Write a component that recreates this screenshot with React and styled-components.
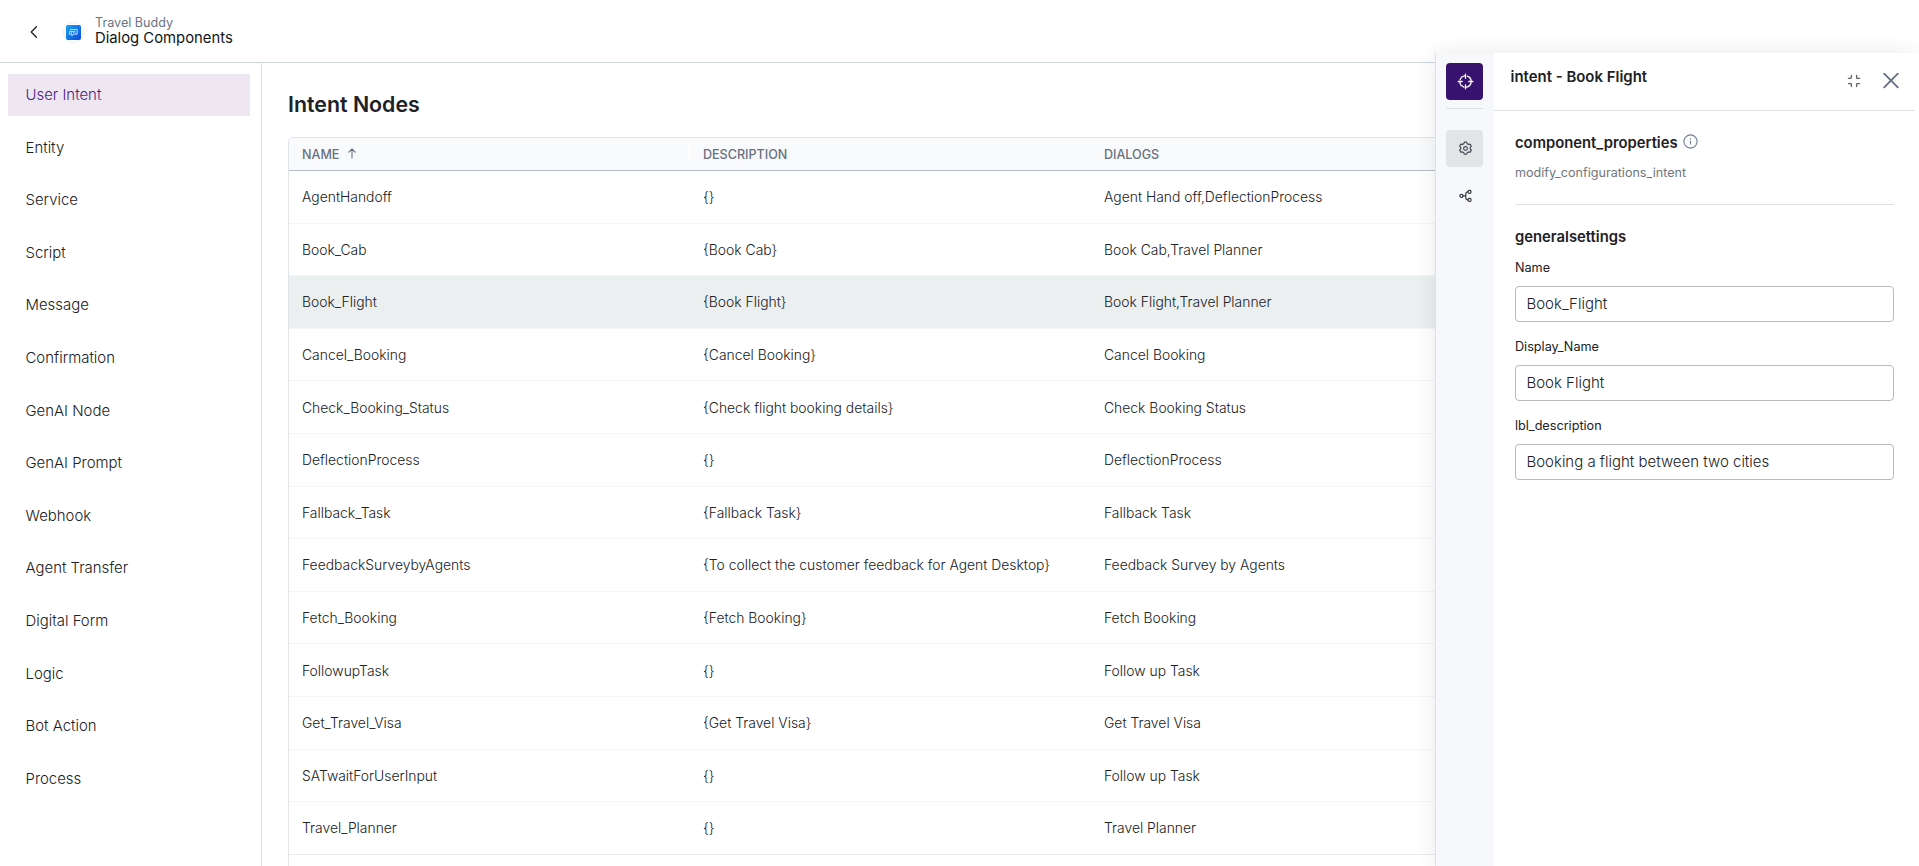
import React from 'react';
import styled, { createGlobalStyle } from 'styled-components';

const GlobalStyle = createGlobalStyle`
  *, *::before, *::after { box-sizing: border-box; }
  html, body, #root { height: 100%; margin: 0; }
  body {
    overflow: hidden;
    background: #fff;
    color: #202124;
    font-family: 'Inter', 'Liberation Sans', sans-serif;
  }
`;

const Page = styled.div`
  position: relative;
  display: flex;
  flex-direction: column;
  height: 866px;
  overflow: hidden;
`;

const TopBar = styled.header`
  display: flex;
  align-items: center;
  flex: none;
  height: 63px;
  padding: 2px 0 0 28px;
  border-bottom: 1px solid #cdd4db;
`;

const BackButton = styled.button`
  display: flex;
  width: 12px;
  padding: 0;
  margin-right: 23px;
  border: 0;
  background: none;
`;

const BotBadge = styled.span`
  display: flex;
  align-items: center;
  justify-content: center;
  width: 21px;
  height: 21px;
  margin-right: 11px;
  border: 1px solid #e9edf3;
  border-radius: 50%;
`;

const Titles = styled.div`
  display: flex;
  flex-direction: column;
  padding-bottom: 3px;
`;

const BotName = styled.span`
  font-size: 12.6px;
  line-height: 15px;
  color: #697586;
`;

const PageName = styled.span`
  font-size: 14.83px;
  line-height: 16px;
  color: #111418;
`;

const Body = styled.div`
  display: flex;
  flex: 1;
  min-height: 0;
`;

const Sidebar = styled.nav`
  display: flex;
  flex-direction: column;
  gap: 10.6px;
  flex: none;
  width: 262px;
  padding: 11px 11px 0 8px;
  border-right: 1px solid #dfe1e4;
`;

const NavItem = styled.a`
  display: flex;
  align-items: center;
  flex: none;
  height: 42px;
  padding-left: 17.5px;
  font-size: 14.95px;
  font-weight: 300;
  color: ${(p) => (p.$active ? '#4b1d7c' : '#202124')};
  background: ${(p) => (p.$active ? '#eee6f1' : 'transparent')};
`;

const Main = styled.main`
  flex: 1;
  min-width: 0;
  padding: 28px 0 0 26px;
`;

const Heading = styled.h1`
  margin: 0 0 19px;
  font-size: 21.35px;
  font-weight: 600;
  line-height: 27px;
`;

const Table = styled.div`
  height: 760px;
  border: 1px solid #e1e4e8;
  border-radius: 5px 0 0 0;
  overflow: hidden;
`;

const Columns = styled.div`
  display: grid;
  grid-template-columns: 401px 401px 1fr;
  align-items: center;
  padding-left: 13px;
`;

const HeadRow = styled(Columns)`
  height: 33px;
  background: #f9fafc;
  border-bottom: 1px solid #b9bdc7;
`;

const HeadCell = styled.div`
  display: flex;
  align-items: center;
  gap: 9px;
  height: 16px;
  margin-right: 13px;
  border-right: ${(p) => (p.$divided ? '2px solid #fff' : '0')};
  font-size: 12.55px;
  font-weight: 500;
  color: #697080;
`;

const Row = styled(Columns)`
  height: 52.6px;
  padding-top: 1px;
  border-bottom: 1px solid ${(p) => (p.$last ? '#e8eaec' : '#f4f5f6')};
  background: ${(p) => (p.$selected ? '#ebefef' : '#fff')};
`;

const Cell = styled.span`
  font-size: 13.9px;
  font-weight: 300;
  white-space: nowrap;
`;

const Drawer = styled.aside`
  position: absolute;
  top: 53px;
  right: 4px;
  bottom: 0;
  display: flex;
  width: 480px;
  border-left: 1px solid #dfe1e5;
  background: #fff;
  box-shadow: 4px 0 0 #fff, 0 0 21px rgba(0, 0, 0, 0.09);
`;

const Rail = styled.div`
  display: flex;
  flex-direction: column;
  align-items: center;
  flex: none;
  width: 58px;
  padding: 10px 1px 0 0;
  background: #f7f8fb;
`;

const RailButton = styled.button`
  display: flex;
  align-items: center;
  justify-content: center;
  width: 37px;
  height: 37px;
  padding: 0 0 1px 1px;
  border: 0;
  border-radius: 4px;
  background: ${(p) => p.$fill || 'transparent'};
`;

const RailDivider = styled.div`
  width: 37px;
  height: 1px;
  margin: 8px 0 21px;
  background: #dfe1e4;
`;

const RailGap = styled.div`
  height: 10px;
`;

const Panel = styled.div`
  flex: 1;
  min-width: 0;
`;

const PanelHeader = styled.div`
  display: flex;
  align-items: flex-start;
  height: 58px;
  padding: 15px 15px 0 16.5px;
  border-bottom: 1px solid #dfe1e4;
`;

const PanelTitle = styled.h2`
  flex: 1;
  margin: 0;
  font-size: 14.95px;
  font-weight: 600;
  line-height: 18px;
`;

const IconButton = styled.button`
  display: flex;
  align-items: center;
  justify-content: center;
  width: 18px;
  height: 18px;
  margin: 4px 0 0 19px;
  padding: 0;
  border: 0;
  background: none;
`;

const PanelBody = styled.div`
  display: flex;
  flex-direction: column;
  padding: 22px 21px 0;
`;

const SectionTitle = styled.h3`
  display: flex;
  align-items: center;
  gap: 5px;
  margin: 0;
  font-size: 14.8px;
  font-weight: 600;
  line-height: 20px;
`;

const InfoMark = styled.svg`
  margin-top: -4px;
`;

const Hint = styled.p`
  margin: 11px 0 22px;
  font-size: 12.6px;
  line-height: 18px;
  color: #72767d;
`;

const Divider = styled.div`
  height: 1px;
  margin-bottom: 22px;
  background: #dfe1e4;
`;

const Field = styled.label`
  display: flex;
  flex-direction: column;
  height: 79px;
`;

const Label = styled.span`
  padding: 12px 0 10px;
  font-size: 12.65px;
  line-height: 17px;
`;

const Input = styled.input`
  width: 100%;
  height: 36px;
  padding: 0 11px 2px 10.5px;
  border: 1px solid #b8bac2;
  border-radius: 4px;
  outline: none;
  background: #fff;
  color: #202124;
  font: 300 14.97px 'Inter', 'Liberation Sans', sans-serif;
`;

const navItems = [
  'User Intent', 'Entity', 'Service', 'Script', 'Message', 'Confirmation', 'GenAI Node',
  'GenAI Prompt', 'Webhook', 'Agent Transfer', 'Digital Form', 'Logic', 'Bot Action', 'Process',
];

const rows = [
  ['AgentHandoff', '{}', 'Agent Hand off,DeflectionProcess'],
  ['Book_Cab', '{Book Cab}', 'Book Cab,Travel Planner'],
  ['Book_Flight', '{Book Flight}', 'Book Flight,Travel Planner'],
  ['Cancel_Booking', '{Cancel Booking}', 'Cancel Booking'],
  ['Check_Booking_Status', '{Check flight booking details}', 'Check Booking Status'],
  ['DeflectionProcess', '{}', 'DeflectionProcess'],
  ['Fallback_Task', '{Fallback Task}', 'Fallback Task'],
  ['FeedbackSurveybyAgents', '{To collect the customer feedback for Agent Desktop}', 'Feedback Survey by Agents'],
  ['Fetch_Booking', '{Fetch Booking}', 'Fetch Booking'],
  ['FollowupTask', '{}', 'Follow up Task'],
  ['Get_Travel_Visa', '{Get Travel Visa}', 'Get Travel Visa'],
  ['SATwaitForUserInput', '{}', 'Follow up Task'],
  ['Travel_Planner', '{}', 'Travel Planner'],
];

const fields = [
  ['Name', 'Book_Flight'],
  ['Display_Name', 'Book Flight'],
  ['lbl_description', 'Booking a flight between two cities'],
];

const BackIcon = () => (
  <svg width="12" height="14" viewBox="0 0 12 14" fill="none" stroke="#202124" strokeWidth="1.3" strokeLinecap="round" strokeLinejoin="round">
    <path d="M8.4 1.8 3.2 7l5.2 5.2" />
  </svg>
);

const BotIcon = () => (
  <svg width="15" height="15" viewBox="0 0 15 15" fill="none">
    <defs>
      <linearGradient id="bot" x1="0" y1="0" x2="1" y2="1">
        <stop offset="0" stopColor="#17a3f0" />
        <stop offset="1" stopColor="#0a4bdc" />
      </linearGradient>
    </defs>
    <rect width="15" height="15" rx="2" fill="url(#bot)" />
    <path d="M4 4.5h7.2v4.7H7.6L6 10.8V9.2H3.4V6.4H9.6" stroke="#cfe6ff" strokeWidth=".9" strokeLinejoin="round" />
    <path d="M5 7.8h.9M6.8 7.8h.9M8.6 7.8h.9" stroke="#fff" strokeWidth="1" />
  </svg>
);

const SortIcon = () => (
  <svg width="8" height="12" viewBox="0 0 8 12" fill="none" stroke="#697080" strokeWidth="1.1" strokeLinecap="round" strokeLinejoin="round">
    <path d="M4 10V1.2M.8 4.2 4 1l3.2 3.2" />
  </svg>
);

const TargetIcon = () => (
  <svg width="17" height="17" viewBox="0 0 17 17" fill="none" stroke="#fff" strokeWidth="1.3" strokeLinecap="round">
    <circle cx="8.5" cy="8.5" r="5.7" strokeDasharray="6.4 2.55" strokeDashoffset="-1.3" />
    <path d="M8.5 1.2v4M8.5 11.8v4M1.2 8.5h4M11.8 8.5h4" />
  </svg>
);

const GearIcon = () => (
  <svg width="15" height="15" viewBox="0 0 24 24" fill="none" stroke="#4a4b55" strokeWidth="1.9" strokeLinejoin="round">
    <path d="m9.3 4.2.9-2.4h3.6l.9 2.4 2.2 1.3 2.6-.4 1.8 3.1-1.7 2v2.6l1.7 2-1.8 3.1-2.6-.4-2.2 1.3-.9 2.4h-3.6l-.9-2.4-2.2-1.3-2.6.4-1.8-3.1 1.7-2v-2.6l-1.7-2 1.8-3.1 2.6.4z" />
    <circle cx="12" cy="12" r="3" />
  </svg>
);

const BranchIcon = () => (
  <svg width="13" height="13" viewBox="0 0 13 13" fill="none" stroke="#34363d" strokeWidth="1.15" strokeLinecap="round">
    <circle cx="2.4" cy="6.8" r="1.6" />
    <rect x="9" y="1.3" width="3" height="3" rx="1.1" />
    <rect x="9" y="9.3" width="3" height="3" rx="1.1" />
    <path d="M4.1 6.8h2.5M9 2.7c-1.9 0-2.2 1-2.2 2.2v3.8c0 1.2.3 2.2 2.2 2.2" />
  </svg>
);

const CollapseIcon = () => (
  <svg width="14" height="14" viewBox="0 0 14 14" fill="none" stroke="#5d6168" strokeWidth="1.3" strokeLinecap="round">
    <path d="M4.4 1.4v2.2a.8.8 0 0 1-.8.8H1.4M9.6 1.4v2.2a.8.8 0 0 0 .8.8h2.2M4.4 12.6v-2.2a.8.8 0 0 0-.8-.8H1.4M9.6 12.6v-2.2a.8.8 0 0 1 .8-.8h2.2" />
  </svg>
);

const CloseIcon = () => (
  <svg width="16" height="16" viewBox="0 0 16 16" fill="none" stroke="#667085" strokeWidth="1.9" strokeLinecap="round">
    <path d="m1.2.7 13.6 13.6M14.8.7 1.2 14.3" />
  </svg>
);

const InfoIcon = () => (
  <InfoMark width="15" height="15" viewBox="0 0 15 15" fill="none" stroke="#707c93" strokeWidth="1.1">
    <circle cx="7.5" cy="7.5" r="6.6" />
    <path d="M7.5 6.8v3.6M7.5 4.3v1.2" />
  </InfoMark>
);

export default function App() {
  return (
    <Page>
      <GlobalStyle />
      <TopBar>
        <BackButton aria-label="Back"><BackIcon /></BackButton>
        <BotBadge><BotIcon /></BotBadge>
        <Titles>
          <BotName>Travel Buddy</BotName>
          <PageName>Dialog Components</PageName>
        </Titles>
      </TopBar>
      <Body>
        <Sidebar>
          {navItems.map((item, i) => <NavItem key={item} $active={i === 0}>{item}</NavItem>)}
        </Sidebar>
        <Main>
          <Heading>Intent Nodes</Heading>
          <Table>
            <HeadRow>
              <HeadCell $divided>NAME<SortIcon /></HeadCell>
              <HeadCell>DESCRIPTION</HeadCell>
              <HeadCell>DIALOGS</HeadCell>
            </HeadRow>
            {rows.map((row, i) => (
              <Row key={row[0]} $selected={i === 2} $last={i === rows.length - 1}>
                {row.map((text, c) => <Cell key={c}>{text}</Cell>)}
              </Row>
            ))}
          </Table>
        </Main>
      </Body>
      <Drawer>
        <Rail>
          <RailButton $fill="#37126e" aria-label="Intent"><TargetIcon /></RailButton>
          <RailDivider />
          <RailButton $fill="#e3e4e6" aria-label="Properties"><GearIcon /></RailButton>
          <RailGap />
          <RailButton aria-label="Connections"><BranchIcon /></RailButton>
        </Rail>
        <Panel>
          <PanelHeader>
            <PanelTitle>intent - Book Flight</PanelTitle>
            <IconButton aria-label="Collapse"><CollapseIcon /></IconButton>
            <IconButton aria-label="Close"><CloseIcon /></IconButton>
          </PanelHeader>
          <PanelBody>
            <SectionTitle>component_properties<InfoIcon /></SectionTitle>
            <Hint>modify_configurations_intent</Hint>
            <Divider />
            <SectionTitle>generalsettings</SectionTitle>
            {fields.map(([label, value]) => (
              <Field key={label}>
                <Label>{label}</Label>
                <Input defaultValue={value} />
              </Field>
            ))}
          </PanelBody>
        </Panel>
      </Drawer>
    </Page>
  );
}
